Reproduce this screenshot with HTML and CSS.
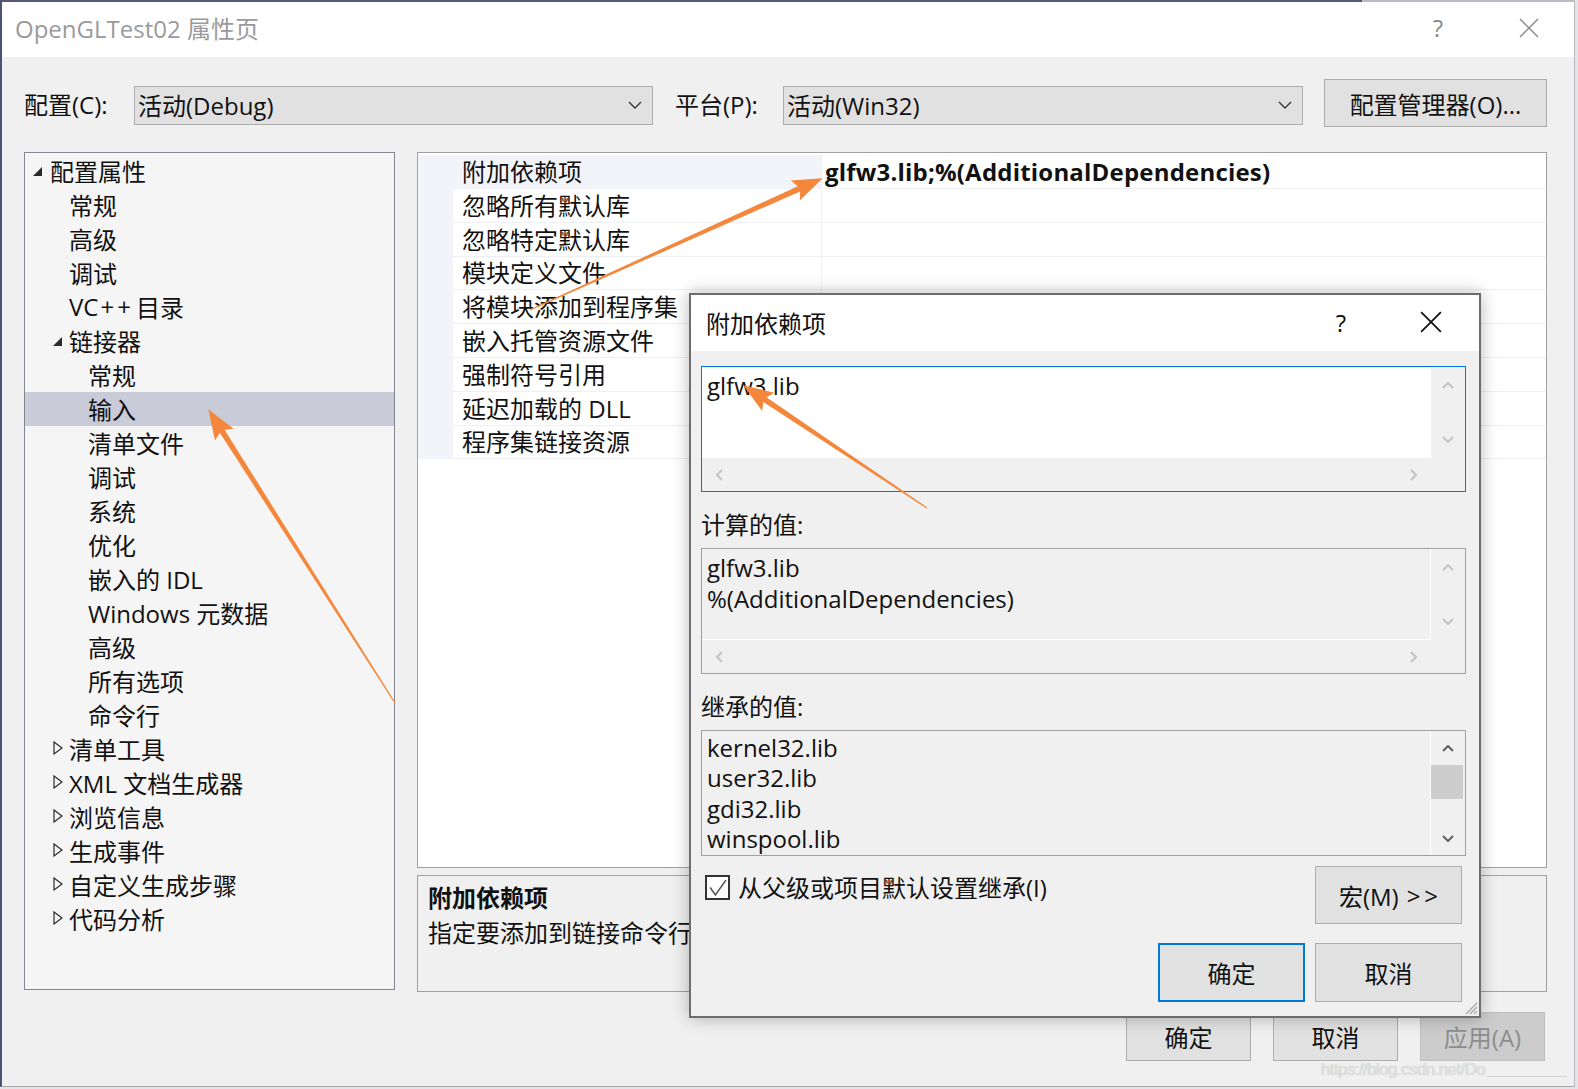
FILE: index.html
```html
<!DOCTYPE html>
<html lang="zh-CN">
<head>
  <meta charset="utf-8">
  <title>OpenGLTest02 属性页</title>
  <link rel="stylesheet" href="styles.css">
</head>
<body>
  <svg class="defs" width="0" height="0">
    <symbol id="chev-down" viewBox="0 0 14 8"><polyline points="1,1 7,7 13,1"/></symbol>
    <symbol id="sb-up" viewBox="0 0 12 7"><polyline points="1,6 6,1 11,6"/></symbol>
    <symbol id="sb-down" viewBox="0 0 12 7"><polyline points="1,1 6,6 11,1"/></symbol>
    <symbol id="sb-left" viewBox="0 0 7 12"><polyline points="6,1 1,6 6,11"/></symbol>
    <symbol id="sb-right" viewBox="0 0 7 12"><polyline points="1,1 6,6 1,11"/></symbol>
    <symbol id="tri-open" viewBox="0 0 11 11"><polygon points="10,1 10,10 1,10"/></symbol>
    <symbol id="tri-closed" viewBox="0 0 10 14"><polygon points="1,1 9,7 1,13"/></symbol>
    <symbol id="cross" viewBox="0 0 20 20"><line x1="1" y1="1" x2="19" y2="19"/><line x1="19" y1="1" x2="1" y2="19"/></symbol>
  </svg>

  <div class="window">
    <div class="frame-top"></div>
    <div class="titlebar">
      <span class="title">OpenGLTest02 属性页</span>
      <span class="title-help">?</span>
      <svg class="title-close"><use href="#cross"/></svg>
    </div>

    <div class="content">
      <div class="config-row">
        <span class="cfg-label">配置(C):</span>
        <div class="select cfg">
          <span class="select-text">活动(Debug)</span>
          <svg class="select-chev"><use href="#chev-down"/></svg>
        </div>
        <span class="cfg-label platform">平台(P):</span>
        <div class="select plat">
          <span class="select-text">活动(Win32)</span>
          <svg class="select-chev"><use href="#chev-down"/></svg>
        </div>
        <button class="btn manager">配置管理器(O)...</button>
      </div>

      <div class="main">
        <div class="tree">
          <div class="node lv0"><span class="twisty"><svg class="tri open"><use href="#tri-open"/></svg></span>配置属性</div>
          <div class="node lv1">常规</div>
          <div class="node lv1">高级</div>
          <div class="node lv1">调试</div>
          <div class="node lv1">VC<span class="plus">++</span> 目录</div>
          <div class="node lv1 branch"><span class="twisty"><svg class="tri open"><use href="#tri-open"/></svg></span>链接器</div>
          <div class="node lv2">常规</div>
          <div class="node lv2 selected">输入</div>
          <div class="node lv2">清单文件</div>
          <div class="node lv2">调试</div>
          <div class="node lv2">系统</div>
          <div class="node lv2">优化</div>
          <div class="node lv2">嵌入的 IDL</div>
          <div class="node lv2">Windows 元数据</div>
          <div class="node lv2">高级</div>
          <div class="node lv2">所有选项</div>
          <div class="node lv2">命令行</div>
          <div class="node lv1 branch"><span class="twisty"><svg class="tri closed"><use href="#tri-closed"/></svg></span>清单工具</div>
          <div class="node lv1 branch"><span class="twisty"><svg class="tri closed"><use href="#tri-closed"/></svg></span>XML 文档生成器</div>
          <div class="node lv1 branch"><span class="twisty"><svg class="tri closed"><use href="#tri-closed"/></svg></span>浏览信息</div>
          <div class="node lv1 branch"><span class="twisty"><svg class="tri closed"><use href="#tri-closed"/></svg></span>生成事件</div>
          <div class="node lv1 branch"><span class="twisty"><svg class="tri closed"><use href="#tri-closed"/></svg></span>自定义生成步骤</div>
          <div class="node lv1 branch"><span class="twisty"><svg class="tri closed"><use href="#tri-closed"/></svg></span>代码分析</div>
        </div>

        <div class="right-col">
          <div class="props">
            <div class="prop first"><span class="gutter"></span><span class="pname">附加依赖项</span><span class="pvalue">glfw3.lib;%(AdditionalDependencies)</span></div>
            <div class="prop"><span class="gutter"></span><span class="pname">忽略所有默认库</span><span class="pvalue"></span></div>
            <div class="prop"><span class="gutter"></span><span class="pname">忽略特定默认库</span><span class="pvalue"></span></div>
            <div class="prop"><span class="gutter"></span><span class="pname">模块定义文件</span><span class="pvalue"></span></div>
            <div class="prop"><span class="gutter"></span><span class="pname">将模块添加到程序集</span><span class="pvalue"></span></div>
            <div class="prop"><span class="gutter"></span><span class="pname">嵌入托管资源文件</span><span class="pvalue"></span></div>
            <div class="prop"><span class="gutter"></span><span class="pname">强制符号引用</span><span class="pvalue"></span></div>
            <div class="prop"><span class="gutter"></span><span class="pname">延迟加载的 DLL</span><span class="pvalue"></span></div>
            <div class="prop"><span class="gutter"></span><span class="pname">程序集链接资源</span><span class="pvalue"></span></div>
          </div>
          <div class="desc">
            <div class="desc-title">附加依赖项</div>
            <div class="desc-text">指定要添加到链接命令行的附加项。[例如 kernel32.lib]</div>
          </div>
        </div>
      </div>

      <div class="footer">
        <button class="btn foot">确定</button>
        <button class="btn foot">取消</button>
        <button class="btn foot disabled">应用(A)</button>
      </div>
    </div>
  </div>

  <!-- 附加依赖项 编辑对话框 -->
  <div class="dialog">
    <div class="dlg-title">
      <span class="dlg-caption">附加依赖项</span>
      <span class="dlg-help">?</span>
      <svg class="dlg-close"><use href="#cross"/></svg>
    </div>
    <div class="dlg-body">
      <div class="listbox editing">
        <div class="lb-text">glfw3.lib</div>
        <div class="lb-vscroll">
          <svg class="sb-v"><use href="#sb-up"/></svg>
          <svg class="sb-v"><use href="#sb-down"/></svg>
        </div>
        <div class="lb-hscroll">
          <svg class="sb-h"><use href="#sb-left"/></svg>
          <svg class="sb-h"><use href="#sb-right"/></svg>
        </div>
        <div class="lb-corner"></div>
      </div>

      <div class="dlg-label">计算的值:</div>
      <div class="listbox computed">
        <div class="lb-text">glfw3.lib<br>%(AdditionalDependencies)</div>
        <div class="lb-vscroll">
          <svg class="sb-v"><use href="#sb-up"/></svg>
          <svg class="sb-v"><use href="#sb-down"/></svg>
        </div>
        <div class="lb-hscroll">
          <svg class="sb-h"><use href="#sb-left"/></svg>
          <svg class="sb-h"><use href="#sb-right"/></svg>
        </div>
        <div class="lb-corner"></div>
      </div>

      <div class="dlg-label">继承的值:</div>
      <div class="listbox inherited">
        <div class="lb-text">kernel32.lib<br>user32.lib<br>gdi32.lib<br>winspool.lib</div>
        <div class="lb-vscroll active">
          <div class="sb-btn"><svg class="sb-v"><use href="#sb-up"/></svg></div>
          <div class="sb-thumb"></div>
          <div class="sb-track"></div>
          <div class="sb-btn"><svg class="sb-v"><use href="#sb-down"/></svg></div>
        </div>
      </div>

      <div class="dlg-row">
        <label class="check">
          <span class="check-box"><svg viewBox="0 0 20 20"><polyline points="3,10 8,17 18,3"/></svg></span>
          从父级或项目默认设置继承(I)
        </label>
        <button class="btn dlg-btn">宏(M) <span class="gt">&gt;&gt;</span></button>
      </div>

      <div class="dlg-actions">
        <button class="btn dlg-btn primary">确定</button>
        <button class="btn dlg-btn">取消</button>
      </div>
    </div>
    <svg class="grip" viewBox="0 0 14 14">
      <line x1="13" y1="2" x2="2" y2="13"/>
      <line x1="13" y1="6" x2="6" y2="13"/>
      <line x1="13" y1="10" x2="10" y2="13"/>
    </svg>
  </div>

  <div class="watermark">https://blog.csdn.net/Do<span class="wm-line"></span></div>

  <!-- 标注箭头 -->
  <svg class="annotations" viewBox="0 0 1578 1089">
    <g transform="translate(395 703) rotate(-122.46)">
      <polygon points="0,-0.6 322,-2.8 318,-11 348,0 318,11 322,2.8 0,0.6"/>
    </g>
    <g transform="translate(530 310) rotate(-24.25)">
      <polygon points="0,-0.6 295,-2.8 291,-11 321,0 291,11 295,2.8 0,0.6"/>
    </g>
    <g transform="translate(927 508) rotate(-146.24)">
      <polygon points="0,-0.6 195,-2.8 191,-11 221,0 191,11 195,2.8 0,0.6"/>
    </g>
  </svg>
</body>
</html>
```

FILE: styles.css
```css
* {
    box-sizing: border-box;
}
html,body {
    margin: 0;
}
body {
    width: 1578px;
    height: 1089px;
    position: relative;
    overflow: hidden;
    background: #e4e4e6;
    font-family: "Open Sans", "Noto Sans CJK SC", sans-serif;
    font-size: 24px;
    color: #111;
}
.defs {
    position: absolute;
}
button {
    font: inherit;
    color: inherit;
}

/* 主窗口 */
.window {
    width: 1575px;
    height: 1087px;
    border-left: 2px solid #4e5274;
    border-right: 1px solid #b9b9bd;
    border-bottom: 1px solid #a8a8a8;
    background: #f0f0f0;
    display: flex;
    flex-direction: column;
}
.frame-top {
    height: 2px;
    flex: none;
    background: linear-gradient(to right, #55587a 1360px, #bcbcc4 1360px);
}
.titlebar {
    height: 55px;
    flex: none;
    background: #fff;
    display: flex;
    align-items: center;
    padding: 0 35px 4px 13px;
    color: #9a9a9a;
}
.title {
    flex: 1;
}
.title-help {
    width: 40px;
    text-align: center;
    margin-right: 61px;
    color: #8a8a8a;
}
.title-close {
    width: 20px;
    height: 20px;
    stroke: #8a8a8a;
    stroke-width: 1.5;
}
.content {
    flex: 1;
    padding: 0 27px 0 22px;
    display: flex;
    flex-direction: column;
}

/* 配置 / 平台 */
.config-row {
    display: flex;
    align-items: flex-start;
    margin-top: 22px;
    height: 48px;
}
.cfg-label {
    width: 110px;
    margin-top: 6px;
    line-height: 39px;
}
.cfg-label.platform {
    width: 108px;
    margin-left: 22px;
}
.select {
    height: 39px;
    margin-top: 7px;
    border: 1px solid #adadad;
    background: #e1e1e1;
    display: flex;
    align-items: center;
    padding: 0 10px 2px 3px;
}
.select.cfg {
    width: 519px;
}
.select.plat {
    width: 520px;
}
.select-text {
    flex: 1;
}
.select-chev {
    width: 14px;
    height: 8px;
    fill: none;
    stroke: #333;
    stroke-width: 1.4;
}
.btn {
    border: 1px solid #adadad;
    background: #e1e1e1;
    padding: 0;
    display: flex;
    align-items: center;
    justify-content: center;
}
.btn.manager {
    width: 223px;
    height: 48px;
    margin-left: 21px;
}

/* 树 + 属性表 */
.main {
    display: flex;
    gap: 22px;
    margin-top: 25px;
    height: 840px;
}
.tree {
    width: 371px;
    height: 838px;
    border: 1px solid #828790;
    background: #f5f5f5;
    padding-top: 1px;
}
.node {
    height: 34px;
    display: flex;
    align-items: center;
    white-space: nowrap;
    padding-bottom: 2px;
}
.node.lv0 {
    padding-left: 7px;
}
.node.lv1 {
    padding-left: 44px;
}
.node.lv1.branch {
    padding-left: 27px;
}
.node.lv2 {
    padding-left: 63px;
}
.node.selected {
    background: #c9cbd9;
}
.plus {
    letter-spacing: 3px;
    margin-left: 2px;
    margin-right: 2px;
}
.twisty {
    width: 18px;
    display: flex;
    align-items: center;
}
.branch .twisty {
    width: 17px;
}
.tri.open {
    width: 11px;
    height: 11px;
    fill: #2b2b2b;
    margin-top: 3px;
}
.tri.closed {
    width: 10px;
    height: 14px;
    fill: none;
    stroke: #2b2b2b;
    stroke-width: 1.2;
    margin-left: 1px;
}
.right-col {
    width: 1130px;
    display: flex;
    flex-direction: column;
    gap: 7px;
}
.props {
    height: 716px;
    border: 1px solid #a0a0a0;
    background: #fff;
    padding-top: 2px;
}
.prop {
    display: grid;
    grid-template-columns: 35px 368px 1fr;
    height: 33.8px;
    line-height: 33px;
}
.gutter {
    background: #f2f4f9;
}
.pname {
    padding-left: 9px;
    border-bottom: 1px solid #eef0f5;
    white-space: nowrap;
}
.pvalue {
    padding-left: 3px;
    border-left: 1px solid #eef0f5;
    border-bottom: 1px solid #eef0f5;
    font-weight: 700;
    white-space: nowrap;
    letter-spacing: 0.2px;
}
.prop.first .pname {
    background: #f2f4f9;
}
.desc {
    height: 117px;
    border: 1px solid #a0a0a0;
    background: #f0f0f0;
    padding: 4px 10px 0;
    line-height: 35px;
    white-space: nowrap;
    overflow: hidden;
}
.desc-title {
    font-weight: 700;
}

/* 底部按钮 */
.footer {
    display: flex;
    justify-content: flex-end;
    gap: 22px;
    margin-top: 20px;
    padding-right: 2px;
}
.btn.foot {
    width: 125px;
    height: 49px;
}
.btn.disabled {
    background: #cccccc;
    border-color: #bfbfbf;
    color: #8d8d8d;
}

/* 对话框 */
.dialog {
    position: absolute;
    left: 689px;
    top: 293px;
    width: 792px;
    height: 725px;
    border: 2px solid #6d6d6d;
    background: #f0f0f0;
    box-shadow: 0 0 16px rgba(0,0,0,0.28);
    display: flex;
    flex-direction: column;
}
.dlg-title {
    height: 56px;
    flex: none;
    background: #fff;
    display: flex;
    align-items: center;
    padding: 0 37px 2px 15px;
}
.dlg-caption {
    flex: 1;
}
.dlg-help {
    width: 40px;
    text-align: center;
    margin-right: 59px;
}
.dlg-close {
    width: 22px;
    height: 22px;
    stroke: #111;
    stroke-width: 1.6;
}
.dlg-body {
    flex: 1;
    padding: 15px 13px 0 10px;
    display: flex;
    flex-direction: column;
}
.dlg-label {
    margin-top: 16px;
    margin-bottom: 6px;
    line-height: 34px;
}
.listbox {
    height: 126px;
    flex: none;
    border: 1px solid #a0a0a0;
    display: grid;
    grid-template-columns: 1fr 34px;
    grid-template-rows: 1fr 33px;
    overflow: hidden;
}
.listbox.editing {
    border-color: #0078d7;
}
.lb-text {
    padding: 3px 5px 0;
    line-height: 31px;
    white-space: nowrap;
}
.editing .lb-text {
    background: #fff;
}
.computed .lb-text,
.inherited .lb-text {
    border-right: 1px solid #fff;
    border-bottom: 1px solid #fff;
}
.inherited {
    grid-template-rows: 1fr;
}
.inherited .lb-text {
    padding-top: 2px;
    line-height: 30.4px;
    border-bottom: none;
}
.lb-vscroll {
    display: flex;
    flex-direction: column;
    align-items: center;
    justify-content: space-between;
    padding: 15px 0;
}
.lb-hscroll {
    display: flex;
    align-items: center;
    justify-content: space-between;
    padding: 0 14px;
}
.sb-v {
    width: 12px;
    height: 7px;
    fill: none;
    stroke: #c4c4c4;
    stroke-width: 2;
}
.sb-h {
    width: 7px;
    height: 12px;
    fill: none;
    stroke: #c4c4c4;
    stroke-width: 2;
}
.lb-vscroll.active {
    padding: 0;
    justify-content: flex-start;
}
.sb-btn {
    height: 34px;
    width: 100%;
    display: flex;
    align-items: center;
    justify-content: center;
}
.active .sb-v {
    stroke: #606060;
}
.sb-thumb {
    width: 32px;
    height: 34px;
    margin-right: 2px;
    background: #cdcdcd;
}
.sb-track {
    flex: 1;
}
.dlg-row {
    display: flex;
    justify-content: space-between;
    align-items: flex-start;
    margin-top: 10px;
    padding-right: 4px;
}
.check {
    display: flex;
    align-items: center;
    gap: 8px;
    margin-top: 6px;
    margin-left: 4px;
    line-height: 31px;
}
.check-box {
    width: 25px;
    height: 25px;
    border: 2px solid #333;
    background: #fff;
    display: flex;
}
.check-box svg {
    width: 21px;
    height: 21px;
    fill: none;
    stroke: #555;
    stroke-width: 1.5;
}
.btn.dlg-btn {
    width: 147px;
    height: 58px;
}
.gt {
    letter-spacing: 4px;
    margin-left: 8px;
    margin-right: -4px;
}
.dlg-actions {
    display: flex;
    justify-content: flex-end;
    gap: 10px;
    margin-top: 19px;
    padding-right: 4px;
}
.dlg-actions .btn.dlg-btn {
    height: 59px;
}
.btn.primary {
    border: 2px solid #0078d7;
}
.grip {
    position: absolute;
    right: 1px;
    bottom: 1px;
    width: 14px;
    height: 14px;
    stroke: #a8a8a8;
    stroke-width: 1.5;
}

/* 水印与标注 */
.watermark {
    position: absolute;
    left: 1321px;
    top: 1060px;
    font-family: "Liberation Sans", sans-serif;
    font-size: 17px;
    letter-spacing: -0.6px;
    color: #e2e2e2;
    text-shadow: 0 0 1px #b8b8b8;
    display: flex;
    align-items: flex-end;
}
.wm-line {
    width: 80px;
    height: 1px;
    margin-left: 2px;
    margin-bottom: 3px;
    background: #cfcfcf;
}
.annotations {
    position: absolute;
    left: 0;
    top: 0;
    width: 1578px;
    height: 1089px;
    fill: #f4873b;
    pointer-events: none;
}
```
